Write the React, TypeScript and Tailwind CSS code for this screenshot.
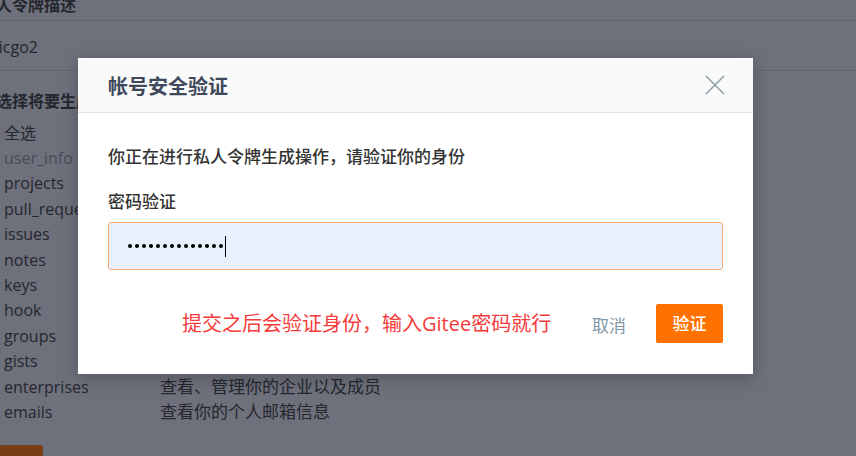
import { useState } from "react";

const scopes: { name: string; desc?: string; muted?: boolean }[] = [
  { name: "全选" },
  { name: "user_info", muted: true },
  { name: "projects" },
  { name: "pull_requests" },
  { name: "issues" },
  { name: "notes" },
  { name: "keys" },
  { name: "hook" },
  { name: "groups" },
  { name: "gists" },
  { name: "enterprises", desc: "查看、管理你的企业以及成员" },
  { name: "emails", desc: "查看你的个人邮箱信息" },
];

const font = {
  fontFamily: '"Open Sans", "Noto Sans CJK SC", sans-serif',
};

export default function App() {
  const [password] = useState("picgo-password");

  return (
    <div
      className="relative w-[856px] h-[456px] overflow-hidden bg-[#6e707c] text-[#25272d]"
      style={font}
    >
      {/* page behind the mask */}
      <div className="flex flex-col">
        <div className="h-[21px] border-b border-[#62646f] -ml-[20px] text-[16px] font-bold leading-[10px]">
          个人令牌描述
        </div>
        <div className="h-[50px] border-b border-[#62646f] -ml-[11px] pt-[3px] flex items-center text-[16px]">
          picgo2
        </div>
        <div className="mt-[18px] -ml-[20px] text-[16px] font-bold leading-[24px]">
          请选择将要生成的令牌权限
        </div>
        <div className="mt-[7px] flex flex-col pl-[4px]">
          {scopes.map((s) => (
            <div key={s.name} className="h-[25.4px] flex items-center text-[16px]">
              <span className={`w-[156px] ${s.muted ? "text-[#4a4c57]" : ""}`}>
                {s.name}
              </span>
              {s.desc && <span className="text-[17px]">{s.desc}</span>}
            </div>
          ))}
        </div>
        <div className="mt-[20px] w-[43px] h-[20px] rounded-[2px] bg-[#783c16]" />
      </div>

      {/* modal */}
      <div className="absolute left-[78px] top-[58px] w-[675px] h-[316px] bg-white shadow-[0_4px_16px_rgba(0,0,0,0.25)] flex flex-col">
        <div className="h-[55px] bg-[#fafafa] border-b border-[#e4e4e4] flex items-center justify-between pl-[30px] pr-[28px]">
          <span className="mt-[4px] text-[20px] font-semibold text-[#40485b]">帐号安全验证</span>
          <svg width="20" height="20" viewBox="0 0 20 20" className="text-[#8fa3ad]">
            <path d="M1 1L19 19M19 1L1 19" stroke="currentColor" strokeWidth="1.6" />
          </svg>
        </div>
        <div className="flex flex-col px-[30px] pt-[33px]">
          <p className="text-[17px] leading-[22px] font-medium text-[#333]">
            你正在进行私人令牌生成操作，请验证你的身份
          </p>
          <label className="mt-[23px] text-[17px] leading-[22px] font-medium text-[#333]">
            密码验证
          </label>
          <div className="mt-[9px] h-[48px] rounded-[3px] border border-[#f5a96c] bg-[#e8f0fe] flex items-center pl-[19px]">
            <div className="flex items-center gap-[3px]" aria-label="password">
              {password.split("").map((_, i) => (
                <span key={i} className="w-[4px] h-[4px] rounded-full bg-black" />
              ))}
            </div>
            <span className="ml-[2px] w-px h-[21px] bg-black" />
          </div>
        </div>
        <div className="mt-[34px] flex items-center pr-[30px]">
          <span className="ml-[104px] text-[20px] text-[#f53b3b]">
            提交之后会验证身份，输入Gitee密码就行
          </span>
          <span className="ml-auto mt-[4px] text-[17px] text-[#7f98a4]">取消</span>
          <button className="ml-[30px] w-[67px] h-[39px] rounded-[2px] bg-[#ff7200] text-white text-[17px] font-medium">
            验证
          </button>
        </div>
      </div>
    </div>
  );
}
